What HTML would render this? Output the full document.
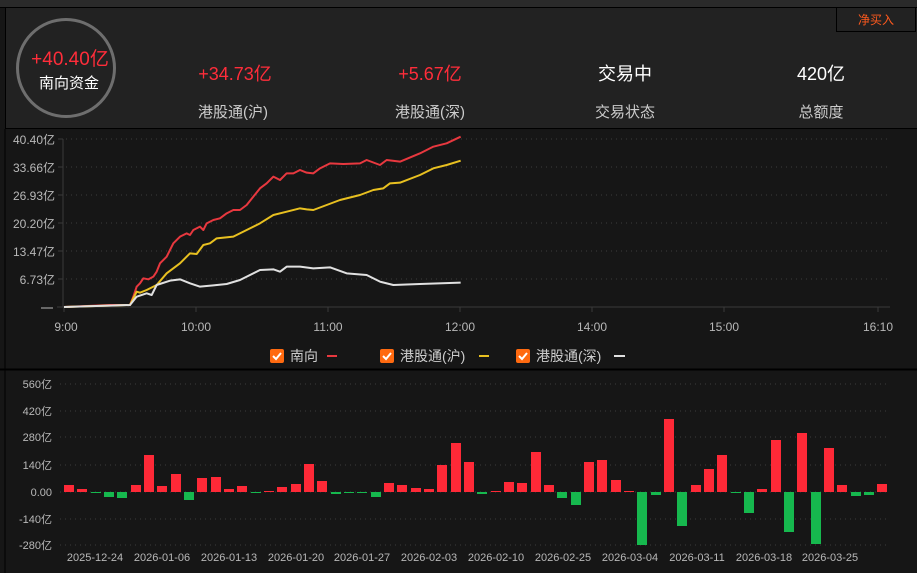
<!DOCTYPE html>
<html><head><meta charset="utf-8"><style>
body{margin:0;width:917px;height:573px;background:#161616;overflow:hidden;font-family:"Liberation Sans","Noto Sans CJK SC",sans-serif;position:relative}
.top{position:absolute;left:0;top:0;width:917px;height:7px;background:#2a2a2a;border-bottom:1px solid #000}
.hdr{position:absolute;left:5px;top:8px;width:912px;height:120px;background:#222;border-left:1px solid #000;border-bottom:1px solid #000}
.circ{position:absolute;left:16px;top:18px;width:100px;height:100px;border:3px solid #6e6e6e;border-radius:50%;box-sizing:border-box}
.t{position:absolute;text-align:center;white-space:nowrap;transform:translateX(-50%)}
.red{color:#ff2d3a}
.box{position:absolute;left:836px;top:7px;width:80px;height:25px;border:1px solid #000;box-sizing:border-box;color:#ff5a1e;font-size:12px;text-align:center;line-height:24px;background:#222}
</style></head><body>
<div class="top"></div>
<div class="hdr"></div>
<div class="circ"></div>
<div class="box">净买入</div>
<div class="t red" style="left:70px;top:44px;font-size:19px">+40.40亿</div>
<div class="t" style="left:69px;top:72px;font-size:15px;color:#fff">南向资金</div>
<div class="t red" style="left:235px;top:60px;font-size:18px">+34.73亿</div>
<div class="t" style="left:233px;top:101px;font-size:15px;color:#ccc">港股通(沪)</div>
<div class="t red" style="left:430px;top:60px;font-size:18px">+5.67亿</div>
<div class="t" style="left:430px;top:101px;font-size:15px;color:#ccc">港股通(深)</div>
<div class="t" style="left:625px;top:60px;font-size:18px;color:#fff">交易中</div>
<div class="t" style="left:625px;top:101px;font-size:15px;color:#ccc">交易状态</div>
<div class="t" style="left:821px;top:60px;font-size:18px;color:#fff">420亿</div>
<div class="t" style="left:821px;top:101px;font-size:15px;color:#ccc">总额度</div>

<svg style="position:absolute;left:0;top:0" width="917" height="573" font-family="Liberation Sans, Noto Sans CJK SC, sans-serif">
<line x1="5" y1="129" x2="5" y2="573" stroke="#000"/>
<line x1="0" y1="369.5" x2="917" y2="369.5" stroke="#000" stroke-width="2"/>
<g stroke="#3c3c3c" stroke-dasharray="1 4">
<line x1="66" y1="139" x2="890" y2="139"/><line x1="66" y1="167" x2="890" y2="167"/><line x1="66" y1="195" x2="890" y2="195"/><line x1="66" y1="223" x2="890" y2="223"/><line x1="66" y1="251" x2="890" y2="251"/><line x1="66" y1="279" x2="890" y2="279"/>
</g>
<line x1="57" y1="307" x2="890" y2="307" stroke="#3a3a3a"/>
<line x1="63" y1="139" x2="63" y2="307" stroke="#3a3a3a"/>
<g stroke="#3a3a3a"><line x1="58" y1="139" x2="63" y2="139"/><line x1="58" y1="167" x2="63" y2="167"/><line x1="58" y1="195" x2="63" y2="195"/><line x1="58" y1="223" x2="63" y2="223"/><line x1="58" y1="251" x2="63" y2="251"/><line x1="58" y1="279" x2="63" y2="279"/>
<line x1="64" y1="307" x2="64" y2="312"/><line x1="196" y1="307" x2="196" y2="312"/><line x1="328" y1="307" x2="328" y2="312"/><line x1="460" y1="307" x2="460" y2="312"/><line x1="592" y1="307" x2="592" y2="312"/><line x1="724" y1="307" x2="724" y2="312"/><line x1="878" y1="307" x2="878" y2="312"/></g>
<g fill="#b8b8b8" font-size="12" text-anchor="end">
<text x="55" y="144">40.40亿</text><text x="55" y="172">33.66亿</text><text x="55" y="200">26.93亿</text><text x="55" y="228">20.20亿</text><text x="55" y="256">13.47亿</text><text x="55" y="284">6.73亿</text>
<line x1="41" y1="308" x2="53" y2="308" stroke="#b8b8b8"/>
</g>
<g fill="#b8b8b8" font-size="12" text-anchor="middle">
<text x="66" y="331">9:00</text><text x="196" y="331">10:00</text><text x="328" y="331">11:00</text><text x="460" y="331">12:00</text><text x="592" y="331">14:00</text><text x="724" y="331">15:00</text><text x="878" y="331">16:10</text>
</g>
<g transform="translate(0,130) scale(0.33333)" fill="none" stroke-width="6" stroke-linejoin="round">
<polyline stroke="#e8383f" points="192,531 330,525 390,525 400,500 410,470 420,460 430,445 445,448 460,440 470,425 480,400 500,380 520,340 540,320 560,310 570,315 580,300 600,290 610,300 620,280 640,270 660,265 680,250 700,240 720,240 740,225 760,200 780,175 800,160 820,140 840,150 860,130 880,130 900,120 920,128 940,130 960,115 990,100 1030,102 1080,100 1100,90 1140,105 1160,90 1200,95 1260,70 1300,50 1340,40 1382,20"/>
<polyline stroke="#e8c020" points="192,531 390,525 410,485 420,488 440,480 470,465 500,430 540,400 570,370 590,372 610,345 630,340 650,325 700,320 740,300 780,280 820,255 860,245 900,235 920,238 940,240 980,225 1020,210 1080,195 1120,180 1150,175 1170,160 1200,158 1260,135 1300,115 1340,105 1382,92"/>
<polyline stroke="#e0e0e0" points="192,531 390,525 410,500 440,490 455,495 470,465 510,452 540,448 570,460 600,470 640,466 680,462 720,450 780,420 820,418 840,425 860,410 900,410 940,415 990,412 1040,430 1100,435 1140,455 1180,465 1260,462 1382,458"/>
</g>
<g font-size="14" fill="#ccc">
<rect x="270" y="349" width="14" height="14" rx="2" fill="#ff6a10"/><path d="M273 356l3 3 5-6" stroke="#fff" stroke-width="2" fill="none"/>
<text x="290" y="361">南向</text><line x1="327" y1="356" x2="337" y2="356" stroke="#e8383f" stroke-width="2"/>
<rect x="380" y="349" width="14" height="14" rx="2" fill="#ff6a10"/><path d="M383 356l3 3 5-6" stroke="#fff" stroke-width="2" fill="none"/>
<text x="400" y="361">港股通(沪)</text><line x1="479" y1="356" x2="489" y2="356" stroke="#e8c020" stroke-width="2"/>
<rect x="516" y="349" width="14" height="14" rx="2" fill="#ff6a10"/><path d="M519 356l3 3 5-6" stroke="#fff" stroke-width="2" fill="none"/>
<text x="536" y="361">港股通(深)</text><line x1="614" y1="356" x2="625" y2="356" stroke="#e0e0e0" stroke-width="2"/>
</g>
<g stroke="#3c3c3c" stroke-dasharray="1 4">
<line x1="60" y1="384" x2="887" y2="384"/><line x1="60" y1="411" x2="887" y2="411"/><line x1="60" y1="437" x2="887" y2="437"/><line x1="60" y1="465" x2="887" y2="465"/><line x1="60" y1="492" x2="887" y2="492"/><line x1="60" y1="519" x2="887" y2="519"/><line x1="60" y1="545" x2="887" y2="545"/>
</g>
<g fill="#b8b8b8" font-size="11" text-anchor="end">
<text x="52" y="388">560亿</text><text x="52" y="415">420亿</text><text x="52" y="441">280亿</text><text x="52" y="469">140亿</text><text x="52" y="496">0.00</text><text x="52" y="523">-140亿</text><text x="52" y="549">-280亿</text>
</g>
<g fill="#b8b8b8" font-size="11" text-anchor="middle">
<text x="95" y="561">2025-12-24</text><text x="162" y="561">2026-01-06</text><text x="229" y="561">2026-01-13</text><text x="296" y="561">2026-01-20</text><text x="362" y="561">2026-01-27</text><text x="429" y="561">2026-02-03</text><text x="496" y="561">2026-02-10</text><text x="563" y="561">2026-02-25</text><text x="630" y="561">2026-03-04</text><text x="697" y="561">2026-03-11</text><text x="764" y="561">2026-03-18</text><text x="830" y="561">2026-03-25</text>
</g>
<g fill="#fe2937">
<rect x="64" y="485" width="10" height="7"/><rect x="77" y="489" width="10" height="3"/><rect x="131" y="485" width="10" height="7"/><rect x="144" y="455" width="10" height="37"/><rect x="157" y="486" width="10" height="6"/><rect x="171" y="474" width="10" height="18"/><rect x="197" y="478" width="10" height="14"/><rect x="211" y="477" width="10" height="15"/><rect x="224" y="489" width="10" height="3"/><rect x="237" y="486" width="10" height="6"/><rect x="264" y="491" width="10" height="1"/><rect x="277" y="487" width="10" height="5"/><rect x="291" y="484" width="10" height="8"/><rect x="304" y="464" width="10" height="28"/><rect x="317" y="481" width="10" height="11"/><rect x="384" y="483" width="10" height="9"/><rect x="397" y="485" width="10" height="7"/><rect x="411" y="488" width="10" height="4"/><rect x="424" y="489" width="10" height="3"/><rect x="437" y="465" width="10" height="27"/><rect x="451" y="443" width="10" height="49"/>
<rect x="464" y="462" width="10" height="30"/><rect x="491" y="491" width="10" height="1"/><rect x="504" y="482" width="10" height="10"/><rect x="517" y="483" width="10" height="9"/><rect x="531" y="452" width="10" height="40"/><rect x="544" y="485" width="10" height="7"/><rect x="584" y="462" width="10" height="30"/><rect x="597" y="460" width="10" height="32"/><rect x="611" y="480" width="10" height="12"/><rect x="624" y="491" width="10" height="1"/><rect x="664" y="419" width="10" height="73"/><rect x="691" y="485" width="10" height="7"/><rect x="704" y="469" width="10" height="23"/><rect x="717" y="455" width="10" height="37"/><rect x="757" y="489" width="10" height="3"/><rect x="771" y="440" width="10" height="52"/><rect x="797" y="433" width="10" height="59"/><rect x="824" y="448" width="10" height="44"/><rect x="837" y="485" width="10" height="7"/><rect x="877" y="484" width="10" height="8"/>
</g>
<g fill="#16b84e">
<rect x="91" y="492" width="10" height="1"/><rect x="104" y="492" width="10" height="5"/><rect x="117" y="492" width="10" height="6"/><rect x="184" y="492" width="10" height="8"/><rect x="251" y="492" width="10" height="1"/><rect x="331" y="492" width="10" height="2"/><rect x="344" y="492" width="10" height="1"/><rect x="357" y="492" width="10" height="1"/><rect x="371" y="492" width="10" height="5"/>
<rect x="477" y="492" width="10" height="2"/><rect x="557" y="492" width="10" height="6"/><rect x="571" y="492" width="10" height="13"/><rect x="637" y="492" width="10" height="53"/><rect x="651" y="492" width="10" height="3"/><rect x="677" y="492" width="10" height="34"/><rect x="731" y="492" width="10" height="1"/><rect x="744" y="492" width="10" height="21"/><rect x="784" y="492" width="10" height="40"/><rect x="811" y="492" width="10" height="52"/><rect x="851" y="492" width="10" height="4"/><rect x="864" y="492" width="10" height="3"/>
</g>
</svg>
</body></html>
